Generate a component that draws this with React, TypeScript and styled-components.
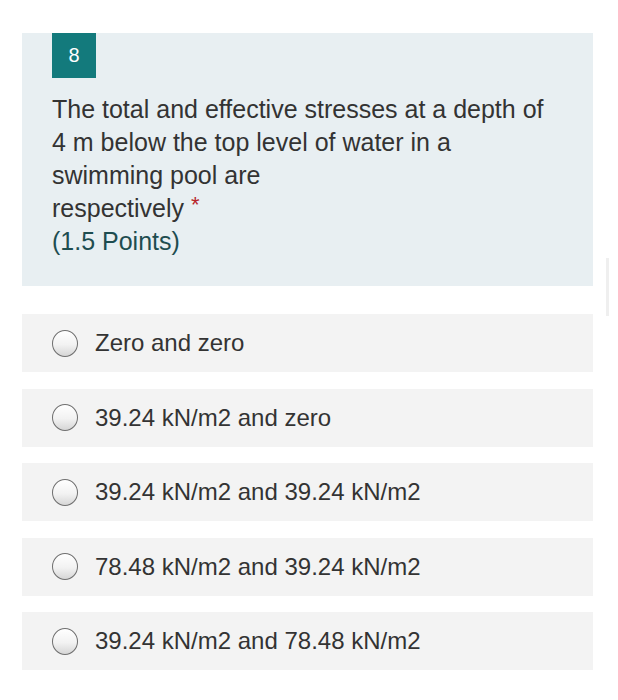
import React from 'react';
import styled, { createGlobalStyle } from 'styled-components';

const GlobalStyle = createGlobalStyle`
  html, body {
    margin: 0;
    padding: 0;
    background: #fff;
  }
  body {
    font-family: 'Liberation Sans', Arial, sans-serif;
    color: #333;
  }
`;

const PAGE = styled.div`
  position: relative;
  width: 571px;
  padding: 33px 0 0 22px;
`;

const QUESTION = styled.div`
  background: #e8eff2;
  padding: 0 30px 28px;
`;

const BADGE = styled.div`
  width: 44px;
  height: 45px;
  background: #137a7c;
  color: #fff;
  font-size: 20px;
  display: flex;
  align-items: center;
  justify-content: center;
`;

const TITLE = styled.div`
  margin-top: 15px;
  font-size: 25px;
  line-height: 33px;
  color: #333;
`;

const STAR = styled.span`
  color: #b8262c;
  font-size: 22px;
  vertical-align: top;
  margin-left: 7px;
  line-height: 26px;
`;

const POINTS = styled.div`
  color: #1e4d50;
`;

const OPTIONS = styled.div`
  margin-top: 28px;
  display: flex;
  flex-direction: column;
  gap: 16.5px;
`;

const OPTION = styled.label`
  height: 58px;
  background: #f3f3f3;
  display: flex;
  align-items: center;
  padding-left: 30px;
  font-size: 24px;
  color: #333;
`;

const RADIO = styled.span`
  width: 24px;
  height: 25px;
  border-radius: 50%;
  border: 1.5px solid #6f6f6f;
  background: linear-gradient(180deg, #ffffff 0%, #f2f2f2 55%, #d6d6d6 100%);
  margin-right: 17px;
  flex-shrink: 0;
`;

const SCROLL = styled.div`
  position: absolute;
  right: -16px;
  top: 258px;
  width: 3px;
  height: 58px;
  background: #efefef;
`;

const answers = [
  'Zero and zero',
  '39.24 kN/m2 and zero',
  '39.24 kN/m2 and 39.24 kN/m2',
  '78.48 kN/m2 and 39.24 kN/m2',
  '39.24 kN/m2 and 78.48 kN/m2',
];

const App: React.FC = () => {
  return (
    <PAGE>
      <GlobalStyle />
      <QUESTION>
        <BADGE>8</BADGE>
        <TITLE>
          The total and effective stresses at a depth of
          <br />
          4 m below the top level of water in a
          <br />
          swimming pool are
          <br />
          respectively<STAR>*</STAR>
          <POINTS>(1.5 Points)</POINTS>
        </TITLE>
      </QUESTION>
      <OPTIONS>
        {answers.map((a) => (
          <OPTION key={a}>
            <RADIO />
            {a}
          </OPTION>
        ))}
      </OPTIONS>
      <SCROLL />
    </PAGE>
  );
};

export default App;
